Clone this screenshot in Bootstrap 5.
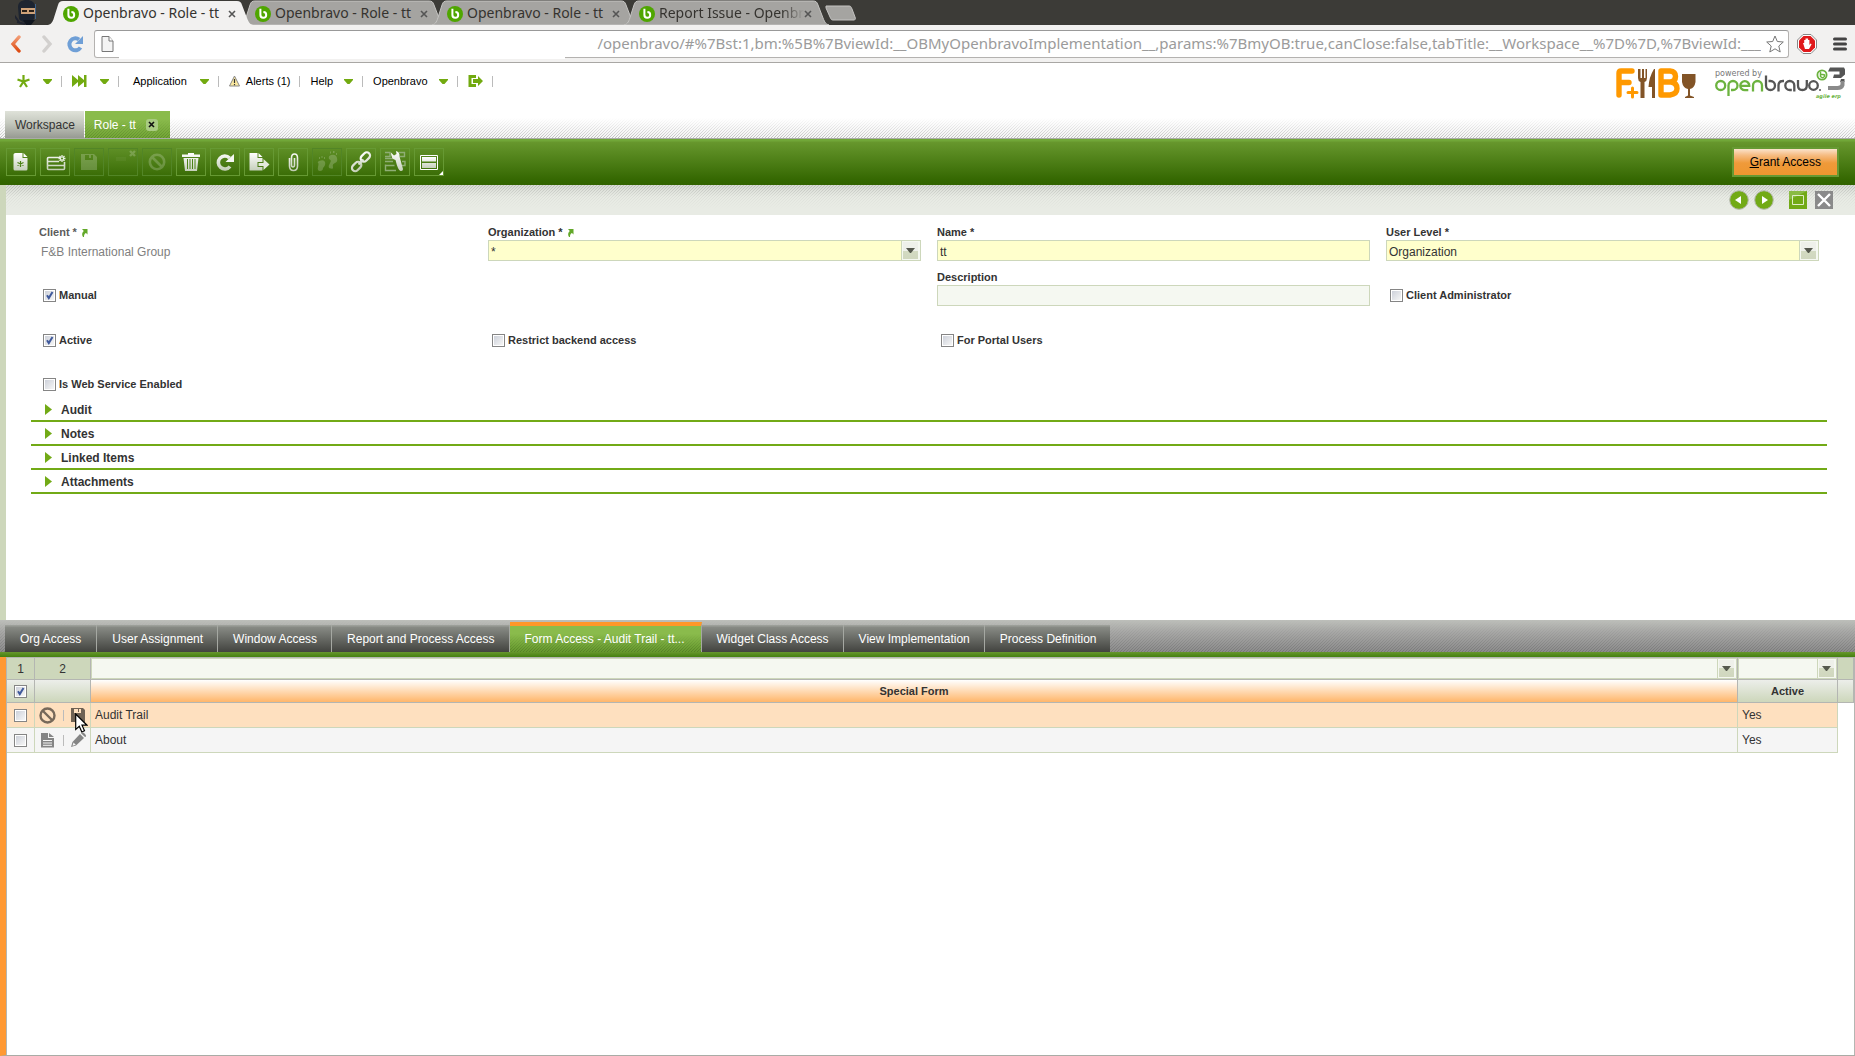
<!DOCTYPE html>
<html lang="en">
<head>
<meta charset="utf-8">
<meta name="viewport" content="width=device-width, initial-scale=1">
<title>Openbravo - Role - tt</title>
<link href="https://cdn.jsdelivr.net/npm/bootstrap@5.3.0/dist/css/bootstrap.min.css" rel="stylesheet">
<style>
  :root { --hatch: url("data:image/svg+xml,%3Csvg xmlns='http://www.w3.org/2000/svg' width='3' height='3' shape-rendering='crispEdges'%3E%3Cpath d='M2 0h1v1H2zM1 1h1v1H1zM0 2h1v1H0z' fill='%23000' fill-opacity='.32'/%3E%3C/svg%3E"); }
  html, body { height: 100%; }
  body { font-family: "Liberation Sans", Arial, sans-serif; font-size: 12px; line-height: 14px; color: #333; background: #fff; }
  a, button, input, select { font: inherit; color: inherit; }
  a { text-decoration: none; }
  svg { display: block; flex: none; }
  button.plain { background: none; border: 0; padding: 0; }

  /* browser window */
  .tabstrip { height: 25px; background: #3c3b37; padding-left: 15px; font-family: "Noto Sans", sans-serif; font-size: 14px; line-height: 19px; color: #35332f; }
  .ninja { width: 30px; margin-right: 3px; }
  .btab { position: relative; width: 205px; height: 25px; margin-right: -13px; padding: 2px 17px 0 15px; }
  .btab > .shape { position: absolute; left: 0; top: 0; z-index: 0; }
  .btab > .fav, .btab > .caption, .btab > button { position: relative; z-index: 1; }
  .btab.current { z-index: 2; }
  .btab .caption { margin-left: 4px; padding-bottom: 3px; flex: 1; overflow: hidden; white-space: nowrap; min-width: 0; }
  .btab .fading { -webkit-mask-image: linear-gradient(90deg, #000 85%, transparent); mask-image: linear-gradient(90deg, #000 85%, transparent); }
  .addressbar { height: 38px; background: #f2f1f0; border-bottom: 1px solid #a9a7a4; padding: 0 8px; }
  .omnibox { position: relative; height: 28px; background: #fff; border: 1px solid #b4b2b0; border-top-color: #999; border-radius: 3px; padding: 0 4px 0 6px; }
  .omnibox input { flex: 1; min-width: 0; border: 0; outline: 0; background: transparent; padding: 0 1px 2px; text-align: right; font-family: "Noto Sans", sans-serif; font-size: 15px; line-height: 22px; color: #9b9b9b; }
  .blanked { position: absolute; left: 24px; right: 1223px; top: 2px; height: 26px; background: #fff; }

  /* application header */
  .apphead { height: 76px; border-bottom: 1px solid #a9aca6; background: linear-gradient(#fff 55px, rgba(240,240,240,.6) 70px, rgba(215,215,215,.25) 76px), var(--hatch); }
  .appmenu { height: 36px; font-size: 11px; color: #000; padding-left: 17px; gap: 9px; }
  .appmenu .sep { margin-right: 1px; }
  .appmenu .wide { gap: 13px; }
  .appmenu .near { gap: 11px; }
  .appmenu .tight { gap: 6px; }
  .sep { width: 1px; height: 11px; background: #bbb; flex: none; }
  .wtabs { padding-left: 5px; gap: 1px; }
  .wtab { height: 27px; padding: 0 9px 0 10px; line-height: 28px; color: #333; background: linear-gradient(#dfe2d9, #c4c8be 45%, #979a92); }
  .wtab.on { color: #fff; background: linear-gradient(rgba(138,187,76,1) 30%, rgba(115,165,53,.5)), var(--hatch), #72a735; padding: 0 12px 0 9px; gap: 10px; }
  .wclose { width: 12px; height: 12px; border-radius: 3px; background: #a9cb82; }
  .logos { padding: 4px 8px 0 0; gap: 19px; }

  .toolbar { height: 46px; padding: 9px 16px 9px 6px; background: linear-gradient(#71a738 0 2px, #67972d 3px, #336600 42px, #326300); }
  .toolbar .tool { width: 30px; height: 28px; border: 1px solid #669933; }
  .toolbar .off { border-color: #528526; }
  .tool.off svg { opacity: .2; }
  .grant { height: 30px; margin-top: -1px; padding: 0 16px; border: 2px solid #669933; color: #000; background: linear-gradient(#fbe3cb, #f6bd85 6px, #ef9a3a 14px, #ee962f); }

  /* form */
  .pane { border-left: 6px solid #cdd7bb; height: 435px; }
  .strip { height: 30px; padding-right: 22px; gap: 5px; background: linear-gradient(rgba(205,208,202,.6), rgba(232,235,228,.85) 12px, #e8ebe4 24px), var(--hatch), #e8ebe4; }
  .strip .maxi { margin: 0 3px 0 10px; }
  .formarea { padding: 10px 28px 0 25px; }
  .frow { --bs-gutter-x: 16px; margin: 0; height: 45px; }
  .frow:nth-child(3) { height: 44px; }
  .frow:nth-child(4) { height: 39px; }
  .flabel { display: flex; align-items: center; gap: 4px; font-size: 11px; line-height: 15px; height: 15px; font-weight: bold; }
  .flabel.muted { color: #5c5c5c; }
  .field { width: 100%; height: 21px; border: 1px solid #cdd7bb; border-radius: 0; padding: 2px 2px 0; background: #ffffcc; outline: 0; color: #333; display: block; }
  .field.optional { background: #f5f8f1; }
  .plainvalue { color: #808080; padding: 5px 2px; }
  .pick { position: relative; }
  .pick select { appearance: none; -webkit-appearance: none; }
  .dropmark { position: absolute; right: 1px; top: 1px; bottom: 1px; width: 18px; pointer-events: none; display: flex; align-items: center; justify-content: center;
     border: solid #f5f8f1; border-width: 1px 2px 1px 1px; background: linear-gradient(#eef0ea 50%, #d3dac2 50%, #d0d7be); box-shadow: -1px 0 0 #cdd7bb; }
  .cb { appearance: none; -webkit-appearance: none; flex: none; width: 13px; height: 13px; margin: 0; border: 1px solid #858585; background: linear-gradient(135deg, #cdd1da, #f6f6f6) content-box, #fff; padding: 1px; box-shadow: none; }
  .cb:checked { background: url("data:image/svg+xml,%3Csvg xmlns='http://www.w3.org/2000/svg' viewBox='0 0 11 11'%3E%3Cpath d='M3 5.2 4.8 8 8.5 2' fill='none' stroke='%23405a9c' stroke-width='2'/%3E%3C/svg%3E") border-box center/11px, linear-gradient(135deg, #cdd1da, #f6f6f6) content-box, #fff; }
  .check { display: inline-flex; align-items: center; gap: 3px; padding: 19px 4px 0; font-size: 11px; line-height: 13px; font-weight: bold; }
  .sect { display: flex; align-items: center; width: 100%; height: 24px; gap: 9px; padding: 1px 0 0 13px; border: 0; border-bottom: 2px solid #72aa16; background: none; font-weight: bold; }

  /* child tabs */
  .childtabs { height: 32px; padding-left: 5px; background: linear-gradient(#bdbfba, rgba(170,170,168,.85) 12px, rgba(130,130,130,.6)), var(--hatch), #999; }
  .ctab { height: 27px; padding: 0 14px 0 15px; line-height: 29px; color: #fff; background: linear-gradient(#9c9f99 0 1px, #888b85 2px, #42433f); border-right: 1px solid #a5a8a2; }
  .ctab:first-child { padding-right: 15px; }
  .ctab:last-child { border: 0; }
  .ctab.on { height: 30px; padding-right: 16px; border-top: 4px solid #fe9729; line-height: 27px; background: linear-gradient(rgba(138,187,76,1) 30%, rgba(100,150,45,.5)), var(--hatch), #659a2c; }
  .greenbar { height: 5px; background: linear-gradient(#67972d, #44800f); }

  .gridpane { border-left: 6px solid #ff9933; border-bottom: 1px solid #a9aca6; }
  .gridinner { border: solid #b4b6b2; border-width: 1px 1px 0; }
  .gtable { width: 100%; table-layout: fixed; border-collapse: separate; border-spacing: 0; }
  .w-select { width: 28px; } .w-tools { width: 56px; } .w-active { width: 100px; } .w-scroll { width: 16px; }
  .gtable th, .gtable td { padding: 0 4px; height: 25px; vertical-align: middle; }
  .gtable th { border: solid #b4b6b2; border-width: 0 1px 1px 0; }
  .gtable td { border: solid #cdd7bb; border-width: 0 1px 1px 0; }
  .gtable .filters th { height: 22px; background: #cdd7bb; font-weight: normal; padding: 0; text-align: center; }
  .gtable .heads th { height: 23px; font-size: 11px; text-align: center; background: linear-gradient(#eceeea, #cdd7bb); }
  .gtable .heads .sorted { background: linear-gradient(#fff, #ffb66a); }
  .gtable .hot td { background: #fee0bf; }
  .gtable .even td { background: #f5f5f5; }
  .gtable .void { background: #fff !important; border: 0; }
  .gtable .field { background: #f5f8f1; }
  .gtable .cb { display: block; margin: 0 auto; }
  .pointer { position: absolute; left: 5px; top: 6px; z-index: 3; pointer-events: none; }
</style>
</head>
<body class="d-flex flex-column">

<svg width="0" height="0" class="position-absolute" aria-hidden="true">
  <defs>
    <linearGradient id="metal" x1="0" y1="0" x2="0" y2="1"><stop offset="0" stop-color="#fff"/><stop offset="1" stop-color="#c5cfbb"/></linearGradient>
    <linearGradient id="metaluser" gradientUnits="userSpaceOnUse" x1="0" y1="3" x2="0" y2="25"><stop offset="0" stop-color="#fff"/><stop offset="1" stop-color="#b5c3a5"/></linearGradient>
    <linearGradient id="ember" x1="0" y1="0" x2="0" y2="1"><stop offset="0" stop-color="#f29a72"/><stop offset="1" stop-color="#dd4b12"/></linearGradient>
    <symbol id="favicon" viewBox="0 0 16 16"><circle cx="8" cy="8" r="8" fill="#4fa600"/><path d="M5.400 2.800v6a2.900 2.900 0 1 0 3-2.800" fill="none" stroke="#fff" stroke-width="2"/></symbol>
    <symbol id="cross" viewBox="0 0 8 8"><path d="M1 1l6 6M7 1L1 7" stroke="#555" stroke-width="1.600"/></symbol>
    <symbol id="caret" viewBox="0 0 9 5"><path d="M0 0h9v1L5.500 5h-2L0 1z" fill="#72aa10"/></symbol>
    <symbol id="drop" viewBox="0 0 9 5"><path d="M0 0h9L5 5H4z" fill="#55584e"/></symbol>
    <symbol id="tabshape" viewBox="0 0 205 25"><path d="M0 25C4 24 5 21 6.500 16L10 5C11 2 12 1 15 1H189C192 1 193 2 194 5L199 18C201 23 202 24 205 25z"/></symbol>
    <symbol id="goto" viewBox="0 0 7 8"><path d="M1 0h5.500v5.500L5 4C3.500 4.500 3 6 3 8H2C.5 5.500 1 3.500 2.800 2z" fill="#62a829"/></symbol>
    <symbol id="fold" viewBox="0 0 8 11"><path d="M1 0l7 5.500L1 11z" fill="#72aa16"/></symbol>
  </defs>
</svg>

<header>
  <div class="tabstrip d-flex">
    <svg class="ninja" width="30" height="25" viewBox="0 0 30 25"><path d="M4 22L-1 15M7 20l-2-7M10 24l-8-2" stroke="#202430" stroke-width="2"/><path d="M3 7C3 1 8 0 12 0s9 2 8 9l-1 10c-4 5-11 5-15 0z" fill="#1d2430"/><path d="M6 8h14v6H6z" fill="#cfa279"/><path d="M7 10h5v2H7zm7 0h5v2h-5z" fill="#2b2119"/><path d="M8 20l3 5h5l4-5" fill="#11161f"/><path d="M20.500 4v15" stroke="#3f628a" fill="none"/></svg>
    <div class="btab current d-flex align-items-center"><svg class="shape" width="205" height="25" fill="#f2f1f0"><use href="#tabshape"/></svg><svg class="fav" width="16" height="16"><use href="#favicon"/></svg><span class="caption">Openbravo - Role - tt</span><button class="plain" aria-label="Close tab"><svg width="8" height="8"><use href="#cross"/></svg></button></div>
    <div class="btab d-flex align-items-center"><svg class="shape" width="205" height="25" fill="#a5a4a1" stroke="#c5c4c2"><use href="#tabshape"/></svg><svg class="fav" width="16" height="16"><use href="#favicon"/></svg><span class="caption">Openbravo - Role - tt</span><button class="plain" aria-label="Close tab"><svg width="8" height="8"><use href="#cross"/></svg></button></div>
    <div class="btab d-flex align-items-center"><svg class="shape" width="205" height="25" fill="#a5a4a1" stroke="#c5c4c2"><use href="#tabshape"/></svg><svg class="fav" width="16" height="16"><use href="#favicon"/></svg><span class="caption">Openbravo - Role - tt</span><button class="plain" aria-label="Close tab"><svg width="8" height="8"><use href="#cross"/></svg></button></div>
    <div class="btab d-flex align-items-center"><svg class="shape" width="205" height="25" fill="#a5a4a1" stroke="#c5c4c2"><use href="#tabshape"/></svg><svg class="fav" width="16" height="16"><use href="#favicon"/></svg><span class="caption fading">Report Issue - Openbr</span><button class="plain" aria-label="Close tab"><svg width="8" height="8"><use href="#cross"/></svg></button></div>
    <button class="plain ms-2 align-self-start" aria-label="New tab"><svg width="32" height="21" viewBox="0 0 32 21"><path d="M2 6h23c2 0 2 1 3 3l3 8c1 2 0 3-1 3H9c-2 0-2-1-3-3L2 8z" fill="#a5a4a1" stroke="#c5c4c2"/></svg></button>
  </div>

  <div class="addressbar d-flex align-items-center">
    <button class="plain" aria-label="Back"><svg width="16" height="18" viewBox="0 0 16 18"><path d="M11 2L5 9l6 7" fill="none" stroke="url(#ember)" stroke-width="3.400" stroke-linecap="round"/></svg></button>
    <button class="plain ms-3" aria-label="Forward"><svg width="16" height="18" viewBox="0 0 16 18"><path d="M4 2l6 7-6 7" fill="none" stroke="#d2d0ce" stroke-width="3.400" stroke-linecap="round"/></svg></button>
    <button class="plain ms-2" aria-label="Reload"><svg width="22" height="18" viewBox="0 0 22 18"><path d="M16.500 12.500A6 6 0 1 1 15 4.500" fill="none" stroke="#6f9fd6" stroke-width="4"/><path d="M19 1v8h-8z" fill="#6f9fd6"/></svg></button>
    <div class="omnibox d-flex align-items-center flex-fill ms-2 me-2">
      <svg width="13" height="16" viewBox="0 0 13 16"><path d="M1 .5h7l4 4.500v10.500H1z" fill="#f4f4f4" stroke="#777"/><path d="M8 .5V5h4" fill="#fff" stroke="#777"/></svg>
      <span class="blanked"></span>
      <input type="text" aria-label="Address" value="/openbravo/#%7Bst:1,bm:%5B%7BviewId:__OBMyOpenbravoImplementation__,params:%7BmyOB:true,canClose:false,tabTitle:__Workspace__%7D%7D,%7BviewId:___">
      <button class="plain ms-1" aria-label="Bookmark"><svg width="18" height="18" viewBox="0 0 18 18"><path d="M9 1l2.300 5.500 6 .5-4.500 4 1.400 6L9 13.800 3.800 17l1.400-6L.7 7l6-.5z" fill="#fff" stroke="#777"/></svg></button>
    </div>
    <button class="plain me-3" aria-label="Blocker"><svg width="20" height="20" viewBox="0 0 20 20"><path d="M6 .5h8L19.500 6v8L14 19.500H6L.5 14V6z" fill="#fff" stroke="#888"/><path d="M6.500 2h7L18 6.500v7L13.500 18h-7L2 13.500v-7z" fill="#e0191b"/><path d="M6 9h1.200V6h1.300v3V4.500h1.300V9V4.500h1.300V9V6h1.300v5l1.200-1.500 1 .7L12 15H8z" fill="#fff"/></svg></button>
    <button class="plain" aria-label="Menu"><svg width="14" height="14" viewBox="0 0 14 14"><path d="M1.500 2h11M1.500 7h11M1.500 12h11" stroke="#444" stroke-width="3" stroke-linecap="round"/></svg></button>
  </div>
</header>

<div class="apphead d-flex justify-content-between">
  <div class="d-flex flex-column justify-content-between">
    <nav class="appmenu d-flex align-items-center" aria-label="Main">
      <button class="plain d-flex align-items-center wide" aria-label="Create new"><svg width="13" height="13" viewBox="0 0 13 13"><path d="M6.500 0v6M.5 4.500l6 2 6-2M3 12l3.500-5.500L10 12" fill="none" stroke="#72aa10" stroke-width="2.200"/></svg><svg width="9" height="5"><use href="#caret"/></svg></button><span class="sep"></span>
      <button class="plain d-flex align-items-center wide" aria-label="Quick launch"><svg width="15" height="12" viewBox="0 0 15 12"><path d="M0 0l6 5V0l6 5V0h2.500v12H12V7l-6 5V7l-6 5z" fill="#72aa10"/></svg><svg width="9" height="5"><use href="#caret"/></svg></button><span class="sep"></span>
      <button class="plain d-flex align-items-center wide"><span class="ps-1">Application</span><svg width="9" height="5"><use href="#caret"/></svg></button><span class="sep"></span>
      <button class="plain d-flex align-items-center tight"><svg width="11" height="12" viewBox="0 0 11 12"><path d="M5.500 1L10.500 11H.5z" fill="#fbe9a0" stroke="#888"/><path d="M5.500 4v4M5.500 9v1.200" stroke="#333" stroke-width="1.200"/></svg><span>Alerts (1)</span></button><span class="sep"></span>
      <button class="plain d-flex align-items-center near"><span>Help</span><svg width="9" height="5"><use href="#caret"/></svg></button><span class="sep"></span>
      <button class="plain d-flex align-items-center near"><span>Openbravo</span><svg width="9" height="5"><use href="#caret"/></svg></button><span class="sep"></span>
      <button class="plain" aria-label="Log out"><svg width="15" height="12" viewBox="0 0 15 12"><path d="M8 1.500H2v9h6" fill="none" stroke="#72aa10" stroke-width="3"/><path d="M5 4h5V1l5 5-5 5V8H5z" fill="#72aa10"/></svg></button><span class="sep"></span>
    </nav>
    <div class="d-flex wtabs">
      <a href="#" class="wtab">Workspace</a>
      <a href="#" class="wtab on d-flex align-items-center">Role - tt <span class="wclose d-flex align-items-center justify-content-center"><svg width="7" height="7" viewBox="0 0 7 7"><path d="M1 1l5 5M6 1L1 6" stroke="#111" stroke-width="1.600"/></svg></span></a>
    </div>
  </div>
  <div class="d-flex align-items-start logos">
    <svg width="80" height="32" viewBox="0 -1 80 32" role="img" aria-label="F and B"><path d="M16 3H5Q3 3 3 5v22M4 14.500h9" fill="none" stroke="#ff9900" stroke-width="5.400" stroke-linecap="round"/><path d="M16.500 20v9M12 24.500h9" stroke="#ff9900" stroke-width="3" stroke-linecap="round"/><path d="M22 1v9q0 3 2.500 4v16h4V14q2.500-1 2.500-4V1h-1.500v9H28V1h-2v9h-1.500V1zM38 1q-5 8-5.500 18H36v11h3V1z" fill="#825427"/><path d="M45 3v24h9q7-1 7-6.500t-6-6.500h-8 7.500q5-.5 5-5.500T54 3z" fill="none" stroke="#ff9900" stroke-width="5.400" stroke-linejoin="round"/><path d="M66 6h13.500v8q-1 6-5.500 7v6.500l4 1.500v1H69v-1l3-1.500V21q-5-1-6-7z" fill="#825427"/></svg>
    <svg width="132" height="33" viewBox="0 0 132 33" role="img" aria-label="powered by openbravo 3, agile erp">
      <text x="0" y="9" font-family="DejaVu Sans" font-size="8" fill="#777">powered by</text>
      <g fill="none" stroke-width="2.300" stroke="#6cb33f"><circle cx="5.700" cy="18.500" r="4.500"/><path d="M13.500 29V18.500a4.500 4.500 0 1 1 4.500 4.500h-2M25.500 18.800h8.800a4.500 4.500 0 1 0-4.500 4.400h3.500M38 24.500v-6a4.500 4.500 0 0 1 9 0v6"/></g>
      <g fill="none" stroke-width="2.300" stroke="#555"><path d="M51 8.500v10a4.500 4.500 0 1 0 4.500-4.500h-2M63.500 24.500v-6q0-4.500 4.500-4.500h1M79.300 24.500v-6a4.500 4.500 0 1 0-4.500 4.500h2M83 13v5.500q0 4.500 4.400 4.500t4.400-4.500V13"/><circle cx="98.500" cy="18.500" r="4.300"/></g><circle cx="105" cy="23" r="1" fill="#555"/>
      <circle cx="107" cy="8" r="4.600" fill="none" stroke="#6cb33f" stroke-width="1.800"/><path d="M105.500 4.500v5q2.500 2.500 3.800 0T106 7.500" fill="none" stroke="#6cb33f" stroke-width="1.500"/>
      <path d="M115 .5h14l1 2v5l-4 3.500h-8l1-3.500h5.500V4.500H113zM126 12h3.500v3H125z" fill="#555"/><path d="M127.500 14v4q-1 3-5 3H113" fill="none" stroke="#8a8a8a" stroke-width="4"/>
      <text x="101" y="31" font-family="DejaVu Sans" font-style="italic" font-weight="bold" font-size="5" fill="#6cb33f">agile erp</text>
    </svg>
  </div>
</div>

<div class="toolbar d-flex justify-content-between align-items-start">
  <div class="d-flex gap-1" role="toolbar" aria-label="Record">
    <button class="plain tool" aria-label="New document"><svg width="28" height="26" viewBox="0 0 28 26"><path d="M8.500 4h7v5h5v11q0 1.500-1.500 1.500H8Q6.500 21.500 6.500 20V5.500Q6.500 4 8.500 4z" fill="url(#metal)"/><path d="M16.500 4l4 4h-4z" fill="#fff"/><path d="M13.500 12v6M10.500 13.500l6 3M16.500 13.500l-6 3" stroke="#4c8216" stroke-width="1.200"/></svg></button>
    <button class="plain tool" aria-label="New row"><svg width="28" height="26" viewBox="0 0 28 26"><path d="M19 8.500H7.500q-1 0-1 1v10q0 1 1 1h15q1 0 1-1V13M6.500 12.500H18M6.500 16.500h17" fill="none" stroke="url(#metaluser)" stroke-width="1.600"/><path d="M21 6v7M17.500 9.500h7M18.500 7l5 5M23.500 7l-5 5" stroke="#e8efe0" stroke-width="1.300"/><circle cx="21" cy="9.500" r="1" fill="#4c8216"/></svg></button>
    <button class="plain tool off" aria-label="Save" disabled><svg width="28" height="26" viewBox="0 0 28 26"><path d="M6 5h13l3 3v13H6zM10 6v5h8V6h-2v3h-2V6z" fill="#fff" fill-rule="evenodd"/></svg></button>
    <button class="plain tool off" aria-label="Save and close" disabled><svg width="28" height="26" viewBox="0 0 28 26"><path d="M7 8h10v4H7z" fill="#fff" opacity=".2"/><path d="M21 2l5 5M26 2l-5 5" stroke="#fff" stroke-width="2.400"/></svg></button>
    <button class="plain tool off" aria-label="Undo" disabled><svg width="28" height="26" viewBox="0 0 28 26"><circle cx="14" cy="13" r="7.200" fill="none" stroke="#fff" stroke-width="2.600"/><path d="M9 8l10 10" stroke="#fff" stroke-width="2.600"/></svg></button>
    <button class="plain tool" aria-label="Delete"><svg width="28" height="26" viewBox="0 0 28 26"><path d="M11 4h6v1.500h6V8H5V5.500h6zM6.500 9h15L20 22H8z" fill="url(#metal)"/><path d="M10.500 10v10M13 10v10M15.500 10v10M18 10v10" stroke="#4c8216" stroke-width="1"/></svg></button>
    <button class="plain tool" aria-label="Refresh"><svg width="28" height="26" viewBox="0 0 28 26"><path d="M19 17.500a6.500 6.500 0 1 1-.5-8.500" fill="none" stroke="url(#metaluser)" stroke-width="3.600"/><path d="M23 5v8h-8.500l3-3z" fill="#f6f8f3"/></svg></button>
    <button class="plain tool" aria-label="Export"><svg width="28" height="26" viewBox="0 0 28 26"><path d="M4.500 4h8v5h5v4h-5v5h5v3.500h-13z" fill="url(#metal)"/><path d="M13.500 4l4 4h-4z" fill="#fff"/><path d="M13.500 14h5v-4l6 5.500-6 5.500v-4h-5z" fill="#e3e9dc"/></svg></button>
    <button class="plain tool" aria-label="Attach"><svg width="28" height="26" viewBox="0 0 28 26"><path d="M10.500 9v8M15.500 9v7q0 2-1.500 2t-1.500-2V9q0-4 3-4t3 4v8q0 4.500-4 4.500t-4-4.500V9" fill="none" stroke="url(#metaluser)" stroke-width="1.600"/></svg></button>
    <button class="plain tool off" aria-label="Audit trail" disabled><svg width="28" height="26" viewBox="0 0 28 26"><path d="M6 12q5-2 6 1t-2 6q0 3-3 3t-2-4 0-4q-1-1 1-2zM18 6q5-1 6 3t-2 5-2 4-4 1q-1-2 1-5t-1-4q-1-3 2-4z" fill="#fff"/><path d="M6 9h1M8.500 8h1M11 9h1M17 3.500h1M20 3h1.500M23 5h1" stroke="#fff" stroke-width="2"/></svg></button>
    <button class="plain tool" aria-label="Direct link"><svg width="28" height="26" viewBox="0 0 28 26"><g fill="none" stroke="url(#metaluser)" stroke-width="2.200"><rect x="13" y="5" width="10.500" height="6.500" rx="3.200" transform="rotate(-45 18 8)"/><rect x="4.500" y="14" width="10.500" height="6.500" rx="3.200" transform="rotate(-45 10 17.500)"/><path d="M11.500 15.500l5-5"/></g></svg></button>
    <button class="plain tool" aria-label="Customize"><svg width="28" height="26" viewBox="0 0 28 26"><path d="M4 3.500h5v4H4M17.500 3.500h6v4h-5M4 12.500h8M4 9.500h8M4.500 16.500h9M4.500 15.500v6H15M21 12.500h3v4h-3" fill="none" stroke="#8fae75" stroke-width="1.400"/><path d="M10 3.500l3 3 2.500-1.500-.5-3q4 1 3.500 5.500L22 20q0 2.500-2.500 2T14.500 11Q10 10 10 3.500z" fill="url(#metal)"/></svg></button>
    <button class="plain tool" aria-label="Views"><svg width="28" height="26" viewBox="0 0 28 26"><path d="M5.500 6.500h17v14h-17z" fill="none" stroke="#fff"/><path d="M7 8h14v4.500H7zM7 14h14v5H7z" fill="url(#metal)"/><path d="M28 22v4h-4z" fill="#fff"/></svg></button>
  </div>
  <button class="grant"><u>G</u>rant Access</button>
</div>

<main class="pane">
  <div class="strip d-flex justify-content-end align-items-center">
    <button class="plain" aria-label="Previous record"><svg width="20" height="20" viewBox="0 0 20 20"><circle cx="10" cy="10" r="9.300" fill="#72aa16" stroke="#b5b8b0"/><path d="M12 6v8l-6-4z" fill="#fff"/></svg></button>
    <button class="plain" aria-label="Next record"><svg width="20" height="20" viewBox="0 0 20 20"><circle cx="10" cy="10" r="9.300" fill="#72aa16" stroke="#b5b8b0"/><path d="M8 6v8l6-4z" fill="#fff"/></svg></button>
    <button class="plain maxi" aria-label="Maximize"><svg width="18" height="18" viewBox="0 0 18 18"><path d="M0 0h18v18H0z" fill="#72aa16"/><path d="M0 0h18L0 9z" fill="#8abb43"/><path d="M3.500 4.500h11v9h-11z" fill="none" stroke="#e0edc8"/></svg></button>
    <button class="plain" aria-label="Close"><svg width="18" height="18" viewBox="0 0 18 18"><path d="M0 0h18v18H0z" fill="#8a8a8a"/><path d="M3 3l12 12M15 3L3 15" stroke="#fff" stroke-width="2.400"/></svg></button>
  </div>
  <form class="formarea">
    <div class="row frow">
      <div class="col-3"><div class="flabel muted"><span>Client *</span><svg width="7" height="8"><use href="#goto"/></svg></div><div class="plainvalue">F&amp;B International Group</div></div>
      <div class="col-3"><label class="flabel" for="org">Organization * <svg width="7" height="8"><use href="#goto"/></svg></label><div class="pick"><select id="org" class="field"><option>*</option></select><span class="dropmark"><svg width="9" height="5"><use href="#drop"/></svg></span></div></div>
      <div class="col-3"><label class="flabel" for="nm">Name *</label><input id="nm" type="text" class="field" value="tt"></div>
      <div class="col-3"><label class="flabel" for="lvl">User Level *</label><div class="pick"><select id="lvl" class="field"><option>Organization</option></select><span class="dropmark"><svg width="9" height="5"><use href="#drop"/></svg></span></div></div>
    </div>
    <div class="row frow">
      <div class="col-6"><label class="check"><input type="checkbox" class="cb" checked>Manual</label></div>
      <div class="col-3"><label class="flabel" for="desc">Description</label><input id="desc" type="text" class="field optional"></div>
      <div class="col-3"><label class="check"><input type="checkbox" class="cb">Client Administrator</label></div>
    </div>
    <div class="row frow">
      <div class="col-3"><label class="check"><input type="checkbox" class="cb" checked>Active</label></div>
      <div class="col-3"><label class="check"><input type="checkbox" class="cb">Restrict backend access</label></div>
      <div class="col-3"><label class="check"><input type="checkbox" class="cb">For Portal Users</label></div>
    </div>
    <div class="row frow">
      <div class="col-3"><label class="check"><input type="checkbox" class="cb">Is Web Service Enabled</label></div>
    </div>
    <button type="button" class="sect"><svg width="8" height="11"><use href="#fold"/></svg>Audit</button>
    <button type="button" class="sect"><svg width="8" height="11"><use href="#fold"/></svg>Notes</button>
    <button type="button" class="sect"><svg width="8" height="11"><use href="#fold"/></svg>Linked Items</button>
    <button type="button" class="sect"><svg width="8" height="11"><use href="#fold"/></svg>Attachments</button>
  </form>
</main>

<nav class="childtabs d-flex align-items-end" aria-label="Child tabs">
  <a href="#" class="ctab">Org Access</a><a href="#" class="ctab">User Assignment</a><a href="#" class="ctab">Window Access</a><a href="#" class="ctab">Report and Process Access</a><a href="#" class="ctab on">Form Access - Audit Trail - tt...</a><a href="#" class="ctab">Widget Class Access</a><a href="#" class="ctab">View Implementation</a><a href="#" class="ctab">Process Definition</a>
</nav>
<div class="greenbar"></div>

<section class="gridpane d-flex flex-column flex-fill">
  <div class="gridinner flex-fill">
    <table class="gtable">
      <colgroup><col class="w-select"><col class="w-tools"><col><col class="w-active"><col class="w-scroll"></colgroup>
      <thead>
        <tr class="filters"><th>1</th><th>2</th>
          <th><div class="pick"><select class="field" aria-label="Filter special form"><option></option></select><span class="dropmark"><svg width="9" height="5"><use href="#drop"/></svg></span></div></th>
          <th><div class="pick"><select class="field" aria-label="Filter active"><option></option></select><span class="dropmark"><svg width="9" height="5"><use href="#drop"/></svg></span></div></th><th></th></tr>
        <tr class="heads"><th><input type="checkbox" class="cb" checked aria-label="Select all"></th><th></th><th class="sorted">Special Form</th><th>Active</th><th></th></tr>
      </thead>
      <tbody>
        <tr class="hot"><td><input type="checkbox" class="cb" aria-label="Select Audit Trail"></td>
          <td><div class="d-flex align-items-center justify-content-between">
            <button class="plain" aria-label="Cancel"><svg width="17" height="17" viewBox="0 0 17 17"><circle cx="8.500" cy="8.500" r="7" fill="none" stroke="#77695a" stroke-width="2.400"/><path d="M3.500 3.500l10 10" stroke="#77695a" stroke-width="2.400"/></svg></button><span class="sep"></span>
            <span class="position-relative"><button class="plain d-block" aria-label="Save row"><svg width="16" height="16" viewBox="0 0 16 16"><path d="M1 1h12l2 2v12H1zM4 2v4h7V2H9v3H8V2z" fill="#6f6254" fill-rule="evenodd"/></svg></button>
            <svg class="pointer" width="13" height="20" viewBox="0 0 13 20"><path d="M.7 1v15.500l3.600-3.300 2.500 5.800 2.700-1.200-2.500-5.600H12z" fill="#fff" stroke="#000" stroke-width="1.200"/></svg></span></div></td>
          <td>Audit Trail</td><td>Yes</td><td class="void"></td></tr>
        <tr class="even"><td><input type="checkbox" class="cb" aria-label="Select About"></td>
          <td><div class="d-flex align-items-center justify-content-between">
            <button class="plain" aria-label="Open in form"><svg width="17" height="16" viewBox="0 0 17 16"><path d="M2 1h7v5h6v9.500H2z" fill="#858585"/><path d="M10 1l5 4h-5z" fill="#858585"/><path d="M4 8.500h9M4 11h9M4 13.300h9" stroke="#f5f5f5" stroke-width="1"/></svg></button><span class="sep"></span>
            <button class="plain" aria-label="Edit row"><svg width="16" height="16" viewBox="0 0 16 16"><path d="M1 15l1.500-5L10 2l4 4-8 7.500z" fill="#858585"/><path d="M2.500 13.700l1-3.200 2.300 2.200z" fill="#f5f5f5"/><path d="M11 1.200q2-1.500 4 .8t0 3z" fill="#858585"/></svg></button></div></td>
          <td>About</td><td>Yes</td><td class="void"></td></tr>
      </tbody>
    </table>
  </div>
</section>

<script src="https://cdn.jsdelivr.net/npm/bootstrap@5.3.0/dist/js/bootstrap.bundle.min.js"></script>
</body>
</html>
